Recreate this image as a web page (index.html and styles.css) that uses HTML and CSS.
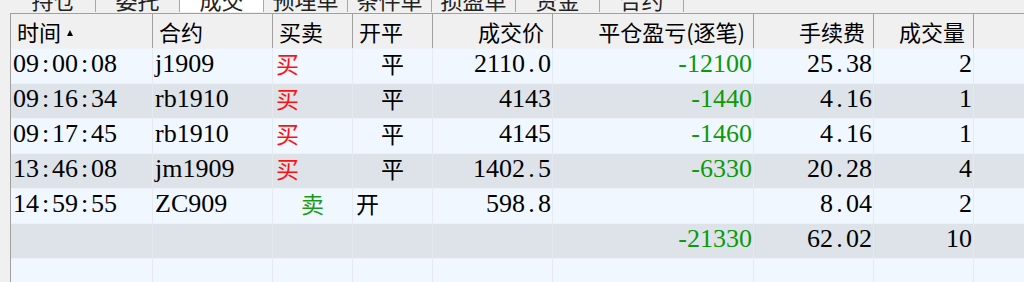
FILE: index.html
```html
<!DOCTYPE html>
<html lang="zh-CN">
<head>
<meta charset="utf-8">
<title>成交</title>
<link rel="stylesheet" href="styles.css">
</head>
<body>
<div class="tabs">
  <div class="tab">持仓</div>
  <div class="tab">委托</div>
  <div class="tab active">成交</div>
  <div class="tab">预埋单</div>
  <div class="tab">条件单</div>
  <div class="tab">损盈单</div>
  <div class="tab">资金</div>
  <div class="tab">合约</div>
</div>
<div class="grid">
  <div class="row head">
    <div class="c l">时间<span class="sort"></span></div>
    <div class="c l">合约</div>
    <div class="c l">买卖</div>
    <div class="c l">开平</div>
    <div class="c r">成交价</div>
    <div class="c r">平仓盈亏(逐笔)</div>
    <div class="c r">手续费</div>
    <div class="c r">成交量</div>
    <div class="c fill"></div>
  </div>
  <div class="row odd">
    <div class="c t">09<span class="w">:</span>00<span class="w">:</span>08</div>
    <div class="c t">j1909</div>
    <div class="c cn buy">买</div>
    <div class="c cn mid">平</div>
    <div class="c n">2110<span class="w">.</span>0</div>
    <div class="c n loss">-12100</div>
    <div class="c n">25<span class="w">.</span>38</div>
    <div class="c n">2</div>
    <div class="c fill"></div>
  </div>
  <div class="row even">
    <div class="c t">09<span class="w">:</span>16<span class="w">:</span>34</div>
    <div class="c t">rb1910</div>
    <div class="c cn buy">买</div>
    <div class="c cn mid">平</div>
    <div class="c n">4143</div>
    <div class="c n loss">-1440</div>
    <div class="c n">4<span class="w">.</span>16</div>
    <div class="c n">1</div>
    <div class="c fill"></div>
  </div>
  <div class="row odd">
    <div class="c t">09<span class="w">:</span>17<span class="w">:</span>45</div>
    <div class="c t">rb1910</div>
    <div class="c cn buy">买</div>
    <div class="c cn mid">平</div>
    <div class="c n">4145</div>
    <div class="c n loss">-1460</div>
    <div class="c n">4<span class="w">.</span>16</div>
    <div class="c n">1</div>
    <div class="c fill"></div>
  </div>
  <div class="row even">
    <div class="c t">13<span class="w">:</span>46<span class="w">:</span>08</div>
    <div class="c t">jm1909</div>
    <div class="c cn buy">买</div>
    <div class="c cn mid">平</div>
    <div class="c n">1402<span class="w">.</span>5</div>
    <div class="c n loss">-6330</div>
    <div class="c n">20<span class="w">.</span>28</div>
    <div class="c n">4</div>
    <div class="c fill"></div>
  </div>
  <div class="row odd">
    <div class="c t">14<span class="w">:</span>59<span class="w">:</span>55</div>
    <div class="c t">ZC909</div>
    <div class="c cn sell mid">卖</div>
    <div class="c cn">开</div>
    <div class="c n">598<span class="w">.</span>8</div>
    <div class="c n loss"></div>
    <div class="c n">8<span class="w">.</span>04</div>
    <div class="c n">2</div>
    <div class="c fill"></div>
  </div>
  <div class="row even">
    <div class="c t"></div>
    <div class="c t"></div>
    <div class="c cn"></div>
    <div class="c cn"></div>
    <div class="c n"></div>
    <div class="c n loss">-21330</div>
    <div class="c n">62<span class="w">.</span>02</div>
    <div class="c n">10</div>
    <div class="c fill"></div>
  </div>
  <div class="row odd">
    <div class="c t"></div>
    <div class="c t"></div>
    <div class="c cn"></div>
    <div class="c cn"></div>
    <div class="c n"></div>
    <div class="c n"></div>
    <div class="c n"></div>
    <div class="c n"></div>
    <div class="c fill"></div>
  </div>
</div>
</body>
</html>
```

FILE: styles.css
```css
html, body {
  margin: 0;
  padding: 0;
  background: #f0f0f0;
  overflow: hidden;
}

body {
  width: 1024px;
  height: 282px;
  font-family: "Liberation Serif", "Noto Sans CJK SC", serif;
}

.tabs {
  display: flex;
  height: 12px;
  padding-left: 12px;
  overflow: hidden;
}

.tab {
  width: 83px;
  height: 12px;
  border-right: 1px solid #a8a8a8;
  background: #f0f0f0;
  font-family: "Noto Sans CJK SC", sans-serif;
  font-size: 22px;
  line-height: 24px;
  text-align: center;
  color: #222;
  overflow: hidden;
}

.tab::before {
  content: "";
  display: block;
  margin-top: -13px;
}

.tab.active {
  background: #ffffff;
}

.grid {
  margin: 1px 0 0 10px;
  border-left: 1px solid #a0a0a0;
  border-top: 1px solid #a0a0a0;
  height: 268px;
  overflow: hidden;
  background: #f0f7ff;
}

.row {
  display: grid;
  grid-template-columns: 142px 120px 80px 80px 120px 201px 120px 100px 1fr;
  height: 35px;
}

.row.odd { background: #f0f7ff; }
.row.even { background: #dee3ea; }

.c {
  border-right: 1px solid #e6eaef;
  border-top: 1px solid #eef2f7;
  white-space: nowrap;
  overflow: hidden;
  font-size: 26px;
  line-height: 29px;
  color: #000;
}

.c.fill { border-right: none; }

.head {
  height: 34px;
  background: #f0f0f0;
}

.head .c {
  border-top: none;
  border-right: 1px solid #a0a0a0;
  font-family: "Noto Sans CJK SC", sans-serif;
  font-size: 22px;
  line-height: 34px;
  box-shadow: inset 0 3px 0 #f0f0f0;
}

.head .c.fill { border-right: none; }

.head .l { padding-left: 6px; }
.head .r { padding-right: 8px; text-align: right; }

.sort {
  display: inline-block;
  width: 0;
  height: 0;
  margin-left: 6px;
  vertical-align: 5px;
  border-left: 3px solid transparent;
  border-right: 3px solid transparent;
  border-bottom: 6px solid #000;
}

.t { padding-left: 2px; }

.n {
  text-align: right;
  padding-right: 1px;
}

.w {
  display: inline-block;
  width: 0.5em;
  text-align: center;
}

.cn {
  font-family: "Noto Sans CJK SC", sans-serif;
  font-size: 23px;
  padding-left: 3px;
}

.cn.mid {
  text-align: center;
  padding-left: 0;
}

.buy { color: #ff1010; }
.sell { color: #1a9a1a; }
.loss { color: #0a9a0a; }
```
